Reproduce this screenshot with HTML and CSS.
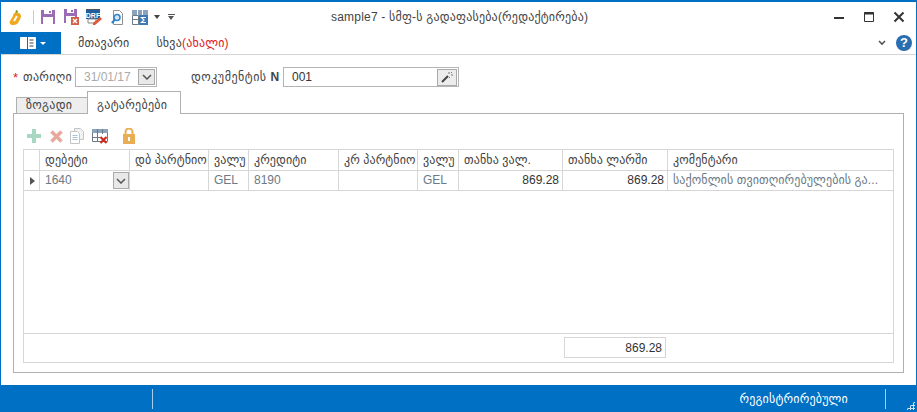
FILE: index.html
```html
<!DOCTYPE html>
<html lang="ka">
<head>
    <meta charset="UTF-8">
    <title>sample7</title>
    <link rel="stylesheet" href="styles.css">
</head>
<body>
    <div class="window">
        <div class="title-bar">
            <div class="quick-tools">
                <svg width="13" height="15" viewBox="0 0 13 15"><path d="M7 0l2 1-1 3H6z" fill="#6f9a2e"/><path d="M6 3c3-1 6 0 6 3 0 2-1 3-2 5-1 3-3 4-6 4-3 0-4-2-3-4 1-2 2-3 3-5 0-2 1-3 2-3z" fill="#f2a81d"/><path d="M8 6L5 11" stroke="#fff" stroke-width="2"/></svg>
                <span class="tool-sep"></span>
                <svg width="14" height="14" viewBox="0 0 14 14"><path d="M0 0h14v14H0z" fill="#9b6bb3"/><path d="M3 0h8v4H3z" fill="#fff"/><path d="M8 1h2v2H8z" fill="#9b6bb3"/><path d="M2 7h10v7H2z" fill="#fff"/></svg>
                <svg class="tool-gap" width="15" height="16" viewBox="0 0 15 16"><path d="M0 0h13v14H0z" fill="#9b6bb3"/><path d="M3 0h7v4H3z" fill="#fff"/><path d="M7 1h2v2H7z" fill="#9b6bb3"/><path d="M2 7h9v7H2z" fill="#fff"/><path d="M7 8h8v8H7z" fill="#d0604a"/><path d="M9 10l4 4m0-4l-4 4" stroke="#fff" stroke-width="1.400"/></svg>
                <svg width="16" height="16" viewBox="0 0 16 16"><path d="M0 0h14v1H0z" fill="#555"/><path d="M0 1h14v9H0z" fill="#1f5f9e"/><text x="7" y="8.500" class="drf-text">DRF</text><path d="M2 10h8v4H2z" fill="#fff" stroke="#888"/><path d="M7 14l7-6 2 2-7 6H7z" fill="#e0563b"/></svg>
                <svg class="tool-gap" width="12" height="15" viewBox="0 0 12 15"><path d="M2.500.5h6l3 3v11h-9z" fill="#fff" stroke="#8f8f8f"/><circle cx="6" cy="7.500" r="3" fill="#d5e7f6" stroke="#2f84c9" stroke-width="1.500"/><path d="M3.800 9.800L.8 13" stroke="#2f84c9" stroke-width="2"/></svg>
                <svg class="tool-gap" width="16" height="15" viewBox="0 0 16 15"><path d="M0 0h16v5H0z" fill="#8ca4bb"/><path d="M5 0h1v5H5zM10 0h1v5h-1z" fill="#fff"/><path d="M.5 5.500h6v9h-6z" fill="#fff" stroke="#6d7b86"/><path d="M0 9.500h7" stroke="#6d7b86"/><path d="M7 5h9v10H7z" fill="#3d7ab5"/><path d="M14 7.500H9.500l2.500 2.500-2.500 2.500H14" stroke="#fff" fill="none" stroke-width="1.200"/></svg>
                <span class="caret-dark"></span>
                <span class="overflow-caret"></span>
            </div>
            <div class="title">sample7 - სმფ-ს გადაფასება(რედაქტირება)</div>
            <div class="window-buttons">
                <svg width="12" height="12" viewBox="0 0 12 12"><path d="M1 7h10" stroke="#333" stroke-width="2"/></svg>
                <svg width="12" height="12" viewBox="0 0 12 12"><path d="M1.500 1.500h9v9h-9z" fill="none" stroke="#333"/><path d="M1 2.500h10" stroke="#333" stroke-width="2"/></svg>
                <svg width="12" height="12" viewBox="0 0 12 12"><path d="M1.500 1.500l9 9m0-9l-9 9" stroke="#333" stroke-width="2"/></svg>
            </div>
        </div>
        <div class="ribbon">
            <div class="file-tab">
                <svg width="16" height="12" viewBox="0 0 16 12"><path d="M.5.5h15v11H.5z" fill="#fff" stroke="#fff"/><path d="M7.500 0v12" stroke="#0070c4"/><path d="M9.500 3h4M9.500 6h4M9.500 9h4" stroke="#444"/></svg>
                <span class="caret-white"></span>
            </div>
            <span class="ribbon-tab">მთავარი</span>
            <span class="ribbon-tab">სხვა<span class="new-mark">(ახალი)</span></span>
            <div class="ribbon-right">
                <svg width="8" height="6" viewBox="0 0 8 6"><path d="M1 1l3 3 3-3" fill="none" stroke="#555" stroke-width="1.600"/></svg>
                <span class="help">?</span>
            </div>
        </div>
        <div class="content">
            <div class="form-row">
                <span class="required">*</span>
                <span class="form-label">თარიღი</span>
                <div class="date-input">
                    <span>31/01/17</span>
                    <span class="combo-btn"><svg width="10" height="6" viewBox="0 0 10 6"><path d="M1 1l4 4 4-4" fill="none" stroke="#555" stroke-width="1.500"/></svg></span>
                </div>
                <span class="form-label doc-label">დოკუმენტის <b>N</b></span>
                <div class="doc-input">
                    <span>001</span>
                    <span class="wand-btn"><svg width="12" height="12" viewBox="0 0 12 12"><path d="M1 11l6-6" stroke="#444" stroke-width="2"/><path d="M8 1v2M10 4h2M10 1l1 1M8 6l1 1" stroke="#777"/></svg></span>
                </div>
            </div>
            <div class="tabs">
                <span class="tab">ზოგადი</span>
                <span class="tab tab-active">გატარებები</span>
            </div>
            <div class="panel">
                <div class="grid-tools">
                    <svg width="14" height="14" viewBox="0 0 14 14"><path d="M5 0h4v5h5v4H9v5H5V9H0V5h5z" fill="#a8d8c2"/></svg>
                    <svg class="tool-gap" width="13" height="13" viewBox="0 0 13 13"><path d="M1.500 1.500l10 10m0-10l-10 10" stroke="#e8a99d" stroke-width="3.500"/></svg>
                    <svg width="14" height="16" viewBox="0 0 14 16"><path d="M4.500.5h6l3 3v8h-9z" fill="#f2f2f2" stroke="#c4c4c4"/><path d="M.5 3.500h7l2 2v10h-9z" fill="#fff" stroke="#c4c4c4"/><path d="M2.500 7.500h5M2.500 9.500h5M2.500 11.500h5" stroke="#a9c3da"/></svg>
                    <svg class="tool-step" width="16" height="15" viewBox="0 0 16 15"><path d="M.5.500h15v12H.5z" fill="#fff" stroke="#6b7a86"/><path d="M0 0h16v4H0z" fill="#8ca4bb"/><path d="M5.500 0v13M10.500 0v5M1 8.500h7" stroke="#6b7a86"/><path d="M8.500 8l6 6m0-6l-6 6" stroke="#cc2b1d" stroke-width="2.200"/></svg>
                    <svg class="lock" width="12" height="16" viewBox="0 0 12 16"><path d="M2.500 7V4a3.500 3.500 0 017 0v3" fill="none" stroke="#e9ae55" stroke-width="2"/><path d="M0 6h12v10H0z" fill="#e9ae55"/><path d="M5 9h2v4H5z" fill="#fff"/></svg>
                </div>
                <div class="grid">
                    <div class="grid-body">
                        <div class="grid-row grid-head">
                            <span></span>
                            <span>დებეტი</span>
                            <span>დბ პარტნიო</span>
                            <span>ვალუ</span>
                            <span>კრედიტი</span>
                            <span>კრ პარტნიო</span>
                            <span>ვალუ</span>
                            <span>თანხა ვალ.</span>
                            <span>თანხა ლარში</span>
                            <span>კომენტარი</span>
                        </div>
                        <div class="grid-row grid-data">
                            <span class="row-marker"></span>
                            <span class="debit-cell">1640<span class="cell-btn"><svg width="10" height="6" viewBox="0 0 10 6"><path d="M1 1l4 4 4-4" fill="none" stroke="#555" stroke-width="1.500"/></svg></span></span>
                            <span></span>
                            <span>GEL</span>
                            <span>8190</span>
                            <span></span>
                            <span>GEL</span>
                            <span class="num">869.28</span>
                            <span class="num">869.28</span>
                            <span class="comment">საქონლის თვითღირებულების გა...</span>
                        </div>
                    </div>
                    <div class="grid-foot">
                        <span class="total">869.28</span>
                    </div>
                </div>
            </div>
        </div>
        <div class="status-bar">
            <span class="status-sep first"></span>
            <span class="status-text">რეგისტრირებული</span>
            <span class="status-sep last"></span>
            <span class="grip"></span>
        </div>
    </div>
</body>
</html>
```

FILE: styles.css
```css
* {
    margin: 0;
    padding: 0;
    box-sizing: border-box;
}

body {
    font-family: 'Liberation Sans', 'DejaVu Sans', sans-serif;
    font-size: 12px;
    color: #444;
    background: #fff;
    overflow: hidden;
}

.window {
    width: 917px;
    height: 412px;
    display: flex;
    flex-direction: column;
    border: 1px solid #0070c4;
    border-width: 2px 1px 0 1px;
}

.title-bar {
    height: 30px;
    display: flex;
    align-items: center;
    position: relative;
}

.quick-tools {
    display: flex;
    align-items: center;
    padding-left: 8px;
    gap: 7px;
}

.tool-gap {
    margin-left: 2px;
}

.drf-text {
    font-family: 'Liberation Sans', sans-serif;
    font-size: 7px;
    font-weight: bold;
    fill: #fff;
    text-anchor: middle;
}

.tool-sep {
    width: 1px;
    height: 14px;
    background: #ccc;
    margin-left: 4px;
}

.caret-dark {
    width: 0;
    height: 0;
    border: 3px solid transparent;
    border-top: 4px solid #444;
    border-bottom: 0;
    margin-left: -1px;
}

.overflow-caret {
    width: 7px;
    height: 6px;
    margin-left: 1px;
    border-top: 1px solid #555;
    position: relative;
}

.overflow-caret::after {
    content: "";
    position: absolute;
    top: 1px;
    left: 0;
    border: 3.500px solid transparent;
    border-top: 4px solid #555;
    border-bottom: 0;
}

.title {
    position: absolute;
    left: 330px;
    top: 8px;
    font-size: 12px;
    letter-spacing: .2px;
    color: #444;
}

.window-buttons {
    margin-left: auto;
    display: flex;
    gap: 18px;
    padding-right: 11px;
}

.ribbon {
    height: 23px;
    display: flex;
    align-items: center;
    border-bottom: 1px solid #d4d4d4;
}

.file-tab {
    width: 60px;
    height: 22px;
    background: #0070c4;
    display: flex;
    align-items: center;
    justify-content: center;
    gap: 4px;
    padding-left: 4px;
}

.caret-white {
    width: 0;
    height: 0;
    border: 3px solid transparent;
    border-top: 3px solid #fff;
    border-bottom: 0;
}

.ribbon-tab {
    margin-left: 17px;
    margin-right: 10px;
    font-size: 12px;
    letter-spacing: .2px;
}

.new-mark {
    color: #e02020;
}

.ribbon-right {
    margin-left: auto;
    display: flex;
    align-items: center;
    gap: 10px;
    padding-right: 4px;
}

.help {
    width: 16px;
    height: 16px;
    border-radius: 50%;
    background: #2a6db0;
    color: #fff;
    font-weight: bold;
    font-size: 13px;
    line-height: 16px;
    text-align: center;
}

.content {
    flex: 1;
    padding: 12px;
    display: flex;
    flex-direction: column;
}

.form-row {
    height: 20px;
    display: flex;
    align-items: center;
}

.required {
    color: #e02020;
    width: 10px;
    font-size: 13px;
}

.form-label {
    width: 52px;
    font-size: 12px;
    letter-spacing: .3px;
}

.doc-label {
    width: 92px;
    margin-left: 34px;
    white-space: nowrap;
    letter-spacing: .5px;
}

.date-input {
    width: 82px;
    height: 20px;
    border: 1px solid #b5b5b5;
    display: flex;
    align-items: center;
    justify-content: space-between;
    padding-left: 8px;
    color: #aaa;
    font-size: 12px;
}

.combo-btn {
    width: 17px;
    height: 16px;
    margin-right: 1px;
    background: #e8e8e8;
    border: 1px solid #aaa;
    display: flex;
    align-items: center;
    justify-content: center;
}

.doc-input {
    width: 176px;
    height: 20px;
    border: 1px solid #b5b5b5;
    display: flex;
    align-items: center;
    justify-content: space-between;
    padding-left: 8px;
    color: #333;
}

.wand-btn {
    width: 20px;
    height: 17px;
    margin-right: 1px;
    background: #ececec;
    border: 1px solid #aaa;
    display: flex;
    align-items: center;
    justify-content: center;
}

.tabs {
    display: flex;
    align-items: flex-end;
    height: 22px;
    margin-left: 3px;
    margin-top: 4px;
}

.tab {
    height: 16px;
    width: 72px;
    padding-left: 9px;
    line-height: 15px;
    background: #eee;
    border: 1px solid #b0b0b0;
    border-bottom: 0;
    letter-spacing: .3px;
}

.tab-active {
    width: 94px;
    height: 23px;
    padding-top: 4px;
    line-height: 18px;
    background: #fff;
    margin-left: -1px;
    margin-bottom: -1px;
    position: relative;
    z-index: 1;
}

.panel {
    flex: 1;
    border: 1px solid #b0b0b0;
    padding: 0 9px 9px 9px;
    display: flex;
    flex-direction: column;
}

.grid-tools {
    height: 35px;
    flex: none;
    display: flex;
    align-items: center;
    gap: 7px;
    padding-left: 4px;
    padding-top: 9px;
}

.tool-step {
    margin-left: 1px;
}

.lock {
    margin-left: 8px;
}

.grid {
    flex: 1;
    border: 1px solid #d6d6d6;
    display: flex;
    flex-direction: column;
}

.grid-body {
    flex: 1;
}

.grid-row {
    display: grid;
    grid-template-columns: 16px 90px 79px 40px 90px 79px 41px 104px 105px 1fr;
}

.grid-row span {
    border-right: 1px solid #d6d6d6;
    border-bottom: 1px solid #d6d6d6;
    padding: 0 5px;
    white-space: nowrap;
    overflow: hidden;
}

.grid-row span:last-child {
    border-right: 0;
}

.grid-head {
    height: 21px;
    line-height: 20px;
    letter-spacing: .1px;
}

.grid-data {
    height: 20px;
    line-height: 19px;
    color: #6b7a86;
}

.grid-data .num {
    text-align: right;
    color: #333;
    padding-right: 3px;
}

.grid-data .comment {
    letter-spacing: .1px;
}

.grid-data span.row-marker {
    position: relative;
}

.row-marker::after {
    content: "";
    position: absolute;
    left: 6px;
    top: 6px;
    border: 4px solid transparent;
    border-left: 5px solid #555;
    border-right: 0;
}

.grid-data span.debit-cell {
    position: relative;
}

.grid-data span.cell-btn {
    position: absolute;
    right: 0;
    top: 1px;
    width: 16px;
    height: 17px;
    background: #e8e8e8;
    border: 1px solid #aaa;
    padding: 0;
    display: flex;
    align-items: center;
    justify-content: center;
}

.grid-foot {
    height: 29px;
    border-top: 1px solid #d6d6d6;
    padding: 3px 0 0 540px;
}

.total {
    display: block;
    width: 102px;
    height: 21px;
    line-height: 20px;
    border: 1px solid #d6d6d6;
    text-align: right;
    padding-right: 3px;
    color: #333;
}

.status-bar {
    height: 27px;
    background: #0070c4;
    display: flex;
    align-items: center;
    color: #fff;
    position: relative;
}

.status-sep {
    width: 1px;
    height: 20px;
    background: #a8cde8;
}

.status-sep.first {
    margin-left: 151px;
}

.status-sep.last {
    margin-right: 30px;
}

.status-text {
    margin-left: auto;
    font-size: 12px;
    letter-spacing: .2px;
    margin-right: 37px;
}

.grip {
    position: absolute;
    right: 1px;
    bottom: 2px;
    width: 9px;
    height: 9px;
    background: radial-gradient(circle, #cfe3f5 1px, transparent 1.200px) 0 0 / 3px 3px;
    clip-path: polygon(100% 0, 100% 100%, 0 100%);
}
```
